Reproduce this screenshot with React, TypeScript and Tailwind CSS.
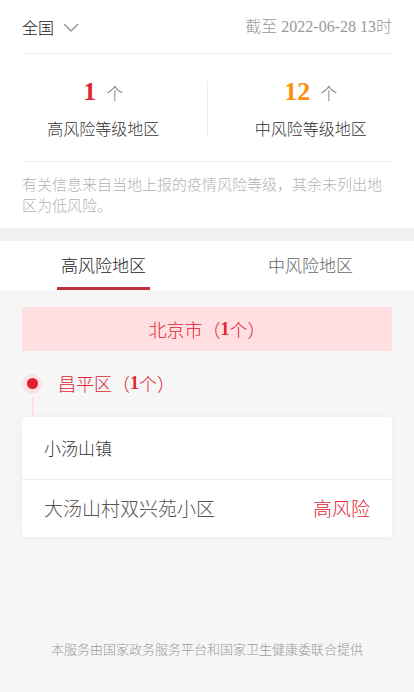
import React from 'react';

const font = { fontFamily: '"Liberation Serif", "Noto Sans CJK SC", serif' };
const sans = { fontFamily: '"Noto Sans CJK SC", sans-serif' };

const ChevronDown: React.FC = () => (
  <svg width="16" height="10" viewBox="0 0 16 10" fill="none" className="ml-[9px] mt-[2px]">
    <path d="M1.5 1.5 L8 8 L14.5 1.5" stroke="#999" strokeWidth="1.6" strokeLinecap="round" strokeLinejoin="round" />
  </svg>
);

const Stat: React.FC<{ num: string; color: string; label: string }> = ({ num, color, label }) => (
  <div className="flex flex-1 flex-col items-center">
    <div className="flex items-baseline h-[24px] leading-none">
      <span className={`text-[26px] font-bold ${color}`} style={font}>{num}</span>
      <span className="ml-[10px] text-[17px] font-light text-[#777]" style={sans}>个</span>
    </div>
    <div className="mt-[14px] text-[16px] leading-[22px] font-light text-[#333]" style={sans}>{label}</div>
  </div>
);

export default function App() {
  return (
    <div className="min-h-[692px] w-[414px] bg-[#f6f6f6] font-light" style={sans}>
      <div className="bg-white px-[22px]">
        <div className="flex h-[54px] items-center justify-between border-b border-[#eee]">
          <div className="flex items-center text-[16px] text-[#222]">
            全国
            <ChevronDown />
          </div>
          <div className="text-[16px] text-[#999]" style={font}>截至 2022-06-28 13时</div>
        </div>
        <div className="-mx-[22px] flex h-[107px] items-center pt-[2px]">
          <Stat num="1" color="text-[#e02431]" label="高风险等级地区" />
          <div className="h-[56px] w-px bg-[#eee]" />
          <Stat num="12" color="text-[#ff8c0a]" label="中风险等级地区" />
        </div>
        <div className="border-t border-[#eee] pt-[11px] pb-[13px] text-[15px] leading-[21px] text-[#b3b3b3]">
          有关信息来自当地上报的疫情风险等级，其余未列出地区为低风险。
        </div>
      </div>
      <div className="h-[13px] bg-[#f0f0f0]" />
      <div className="flex h-[49px] bg-white">
        <div className="flex flex-1 flex-col items-center">
          <div className="flex flex-1 items-center pt-[2px] text-[17px] text-[#222]">高风险地区</div>
          <div className="h-[3px] w-[93px] bg-[#c0303a]" />
        </div>
        <div className="flex flex-1 items-center justify-center pt-[2px] pb-[3px] text-[17px] text-[#666]">中风险地区</div>
      </div>
      <div className="px-[22px] pt-[17px]">
        <div className="flex h-[44px] items-center justify-center bg-[#ffdfe1] text-[18px] text-[#e02431]" style={font}>
          <span className="font-light" style={sans}>北京市（</span>
          <span className="font-bold">1</span>
          <span className="font-light" style={sans}>个）</span>
        </div>
        <div className="mt-[19px] flex items-center">
          <div className="flex h-[20px] w-[20px] items-center justify-center rounded-full bg-[#fde1e3]">
            <div className="h-[11px] w-[11px] rounded-full bg-[#e01f30]" />
          </div>
          <div className="ml-[16px] flex items-center text-[18px] text-[#e02431]" style={font}>
            <span className="font-light" style={sans}>昌平区（</span>
            <span className="font-bold">1</span>
            <span className="font-light" style={sans}>个）</span>
          </div>
        </div>
        <div className="ml-[10px] h-[20px] w-[2px] bg-[#fde1e3]" />
        <div className="rounded-[4px] bg-white shadow-[0_0_8px_rgba(0,0,0,0.04)]">
          <div className="flex h-[63px] items-center border-b border-[#eee] px-[22px] text-[17px] text-[#333]">小汤山镇</div>
          <div className="flex h-[57px] items-center justify-between px-[22px] text-[19px]">
            <span className="text-[#555]">大汤山村双兴苑小区</span>
            <span className="text-[#e02431]">高风险</span>
          </div>
        </div>
        <div className="pt-[102px] text-center text-[13px] text-[#999]">本服务由国家政务服务平台和国家卫生健康委联合提供</div>
      </div>
    </div>
  );
}
